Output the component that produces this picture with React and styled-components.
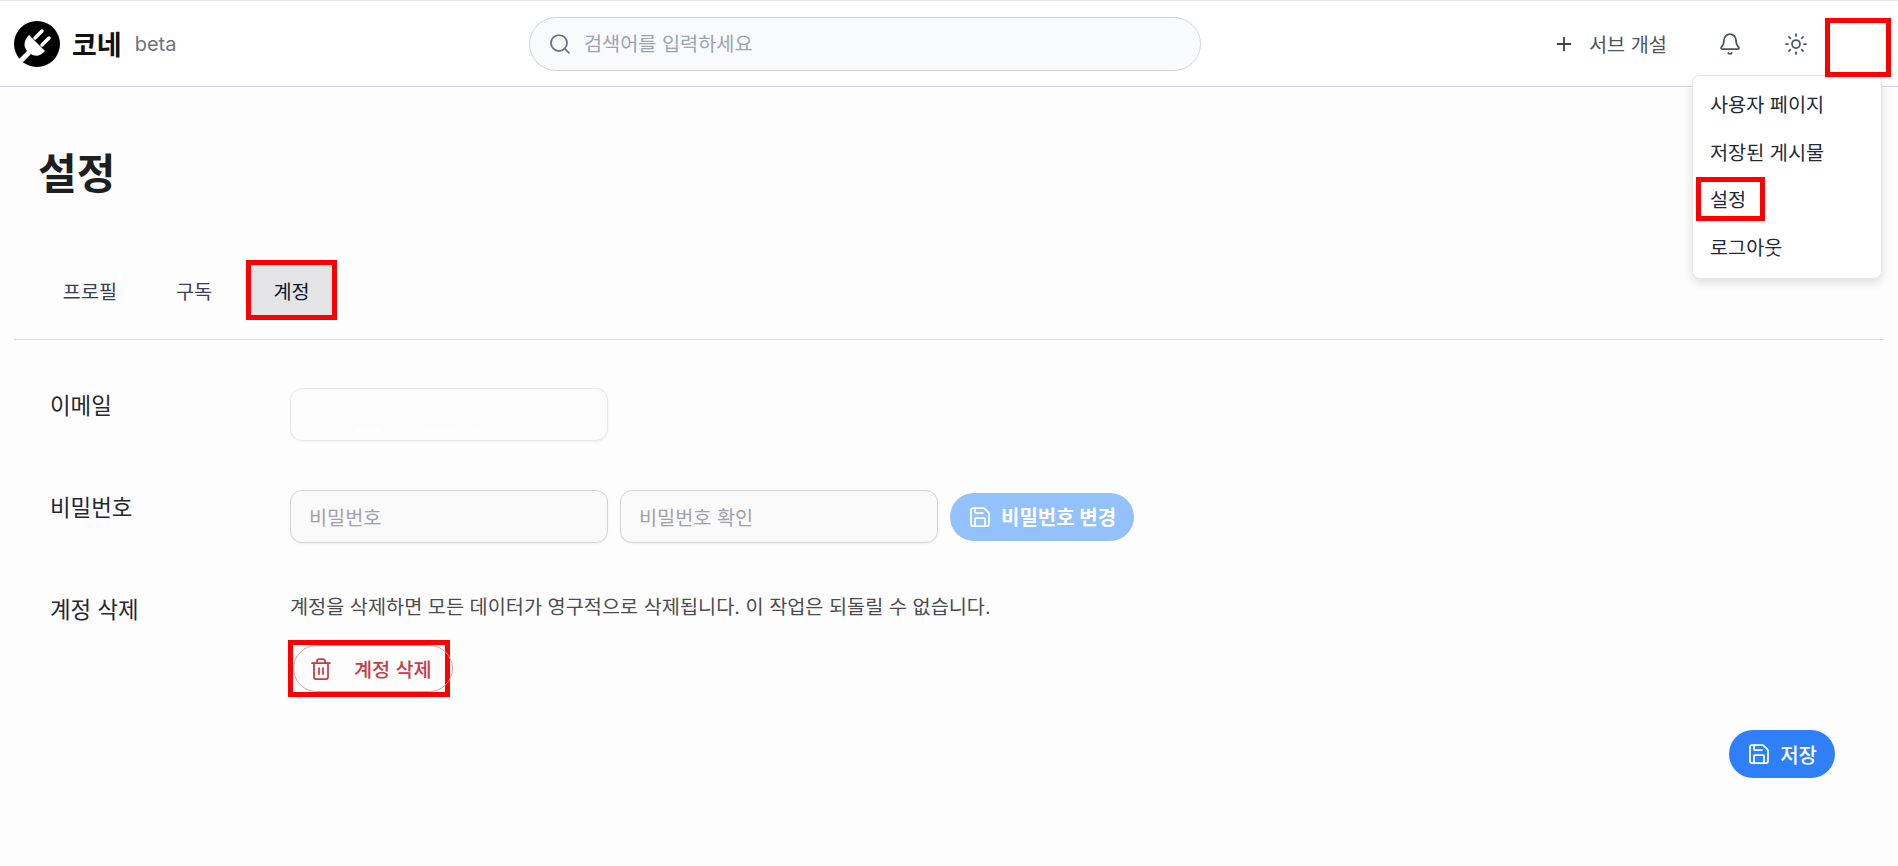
import React from 'react';
import styled, { createGlobalStyle } from 'styled-components';
import { Search, Plus, Bell, Sun, Save, Trash2 } from 'lucide-react';

const GlobalStyle = createGlobalStyle`
  html, body {
    margin: 0;
    padding: 0;
    background: #fdfdfd;
  }
  * {
    box-sizing: border-box;
  }
  body {
    font-family: Inter, "Noto Sans CJK KR", "Noto Sans", sans-serif;
    color: #1f2937;
  }
`

const Page = styled.div`
  width: 1898px;
  height: 866px;
  overflow: hidden;
  position: relative;
  background: #fdfdfd;
`

////  ---- HEADER----

const Header = styled.header`
  height: 87px;
  display: grid;
  grid-template-columns: 515px 672px 1fr;
  align-items: center;
  padding: 0 7px 0 14px;
  background: #fff;
  border-top: 1px solid #e5e7eb;
  border-bottom: 1px solid #d1d5db;
`

const Brand = styled.div`
  display: flex;
  align-items: center;
`

const BrandName = styled.span`
  margin-left: 12px;
  font-size: 27px;
  font-weight: 700;
  color: #111;
`

const Beta = styled.span`
  margin-left: 13px;
  font-size: 20px;
  color: #6b7280;
`

const SearchBox = styled.div`
  height: 54px;
  display: flex;
  align-items: center;
  gap: 12px;
  padding-left: 18px;
  background: #f9fafb;
  border: 1px solid #d1d5db;
  border-radius: 27px;
  font-size: 19.7px;
  color: #9ca3af;

  span {
    padding-bottom: 2px;
  }

  svg {
    color: #6b7280;
  }
`

const HeaderActions = styled.div`
  display: flex;
  align-items: center;
  justify-content: flex-end;
`

const CreateServer = styled.div`
  display: flex;
  align-items: center;
  gap: 14px;
  margin-right: 51px;
  font-size: 19.7px;
  color: #4b5563;
  white-space: nowrap;

  svg {
    color: #374151;
  }
`

const IconButton = styled.div`
  width: 24px;
  height: 24px;
  margin-right: 42px;
  color: #4b5563;
`

const AvatarMark = styled.div`
  position: relative;
  z-index: 1;
  width: 66px;
  height: 59px;
  margin: 8px 0 0 -25px;
  border: 5px solid #f00;
`

const Menu = styled.ul`
  position: absolute;
  top: 75px;
  left: 1692px;
  width: 190px;
  height: 204px;
  margin: 0;
  padding: 4px 0 0 17px;
  list-style: none;
  background: #fff;
  border: 1px solid #e5e7eb;
  border-radius: 8px;
  box-shadow: 0 4px 10px rgba(0, 0, 0, 0.12);
`

const MenuItem = styled.li`
  height: 47.5px;
  display: flex;
  align-items: center;
  font-size: 19.7px;
  color: #1f2937;
`

const MenuMark = styled.span`
  width: 69px;
  height: 44px;
  display: flex;
  align-items: center;
  margin-left: -14px;
  padding-left: 9px;
  border: 5px solid #f00;
`

////  ---- MAIN ----

const Main = styled.main`
  padding: 0 14px;
`

const Title = styled.h1`
  margin: 0;
  padding: 57px 0 0 24px;
  height: 173px;
  font-size: 42px;
  font-weight: 700;
  line-height: 60px;
  color: #1f1f1f;
`

const Tabs = styled.nav`
  display: flex;
  align-items: flex-start;
  height: 80px;
  padding-left: 24px;
  border-bottom: 1px solid #d9d9d9;
`

const Tab = styled.div`
  display: flex;
  align-items: center;
  justify-content: center;
  height: 60px;
  width: ${p => (p.$active ? 91 : 104)}px;
  font-size: 19.7px;
  color: ${p => (p.$active ? '#111827' : '#374151')};
  background: ${p => (p.$active ? '#e4e4e7' : 'transparent')};
  border: ${p => (p.$active ? '5px solid #f00' : 'none')};
`

const Row = styled.section`
  display: flex;
  padding-left: 36px;
  margin-top: ${p => p.$top}px;
`

const Label = styled.div`
  width: 240px;
  flex-shrink: 0;
  font-size: 22.4px;
  line-height: 30px;
  padding-top: 3px;
  color: #1f2937;
`

const Field = styled.div`
  width: 318px;
  height: 53px;
  display: flex;
  align-items: center;
  padding-left: 18px;
  background: #fafafa;
  border: 1px solid #d4d4d8;
  border-radius: 12px;
  box-shadow: 0 1px 2px rgba(0, 0, 0, 0.05);
  font-size: 19.7px;
  color: #a1a1aa;
`

const EmailField = styled(Field)`
  padding: 31px 0 0 65px;
  background: #fcfcfc;
  border-color: #e8e8e8;
`

const HiddenChar = styled.span`
  width: ${p => p.$width}px;
  height: 3px;
  margin-right: ${p => p.$gap}px;
  background: #fff;
`

const FieldRow = styled.div`
  display: flex;
  align-items: center;
  gap: 12px;
`

const Pill = styled.div`
  height: 48px;
  display: flex;
  align-items: center;
  gap: 9px;
  padding: 0 18px;
  border-radius: 24px;
  font-size: 20px;
  font-weight: ${p => (p.$bold ? 700 : 500)};
  color: #fff;
  background: ${p => (p.$muted ? '#93c1fb' : '#2f80f8')};
`

const DangerColumn = styled.div`
  display: flex;
  flex-direction: column;
  align-items: flex-start;
`

const DangerText = styled.p`
  margin: 0;
  font-size: 19.7px;
  line-height: 30px;
  color: #4b4b4f;
`

const DeleteWrap = styled.div`
  margin: 18px 0 0 -2px;
  width: 162px;
  height: 57px;
  border: 5px solid #f00;
`

const DeleteButton = styled.div`
  width: 160px;
  height: 47px;
  display: flex;
  align-items: center;
  padding-left: 15px;
  gap: 21px;
  background: transparent;
  border: 1px solid #d9a0a5;
  border-radius: 24px;
  font-size: 19.7px;
  font-weight: 500;
  color: #cb3a47;
  white-space: nowrap;
`

const SaveRow = styled.div`
  position: absolute;
  top: 730px;
  right: 63px;
`

function Logo() {
  return (
    <svg width="46" height="46" viewBox="0 0 46 46">
      <circle cx="23" cy="23" r="23" fill="#000" />
      <path fill="#fff" d="M15 14 L31 30 C27 35 21 36 17 33 L7 43 L3 40 L13 30 C9 25 10 19 15 14 Z" />
      <path stroke="#fff" strokeWidth="3.5" strokeLinecap="round" d="M21 17 L28 10 M28 24 L35 17" />
    </svg>
  )
}

function App() {
  return (
    <Page>
      <GlobalStyle />

      <Header>
        <Brand>
          <Logo />
          <BrandName>코네</BrandName>
          <Beta>beta</Beta>
        </Brand>

        <SearchBox>
          <Search size={24} strokeWidth={1.75} />
          <span>검색어를 입력하세요</span>
        </SearchBox>

        <HeaderActions>
          <CreateServer>
            <Plus size={22} strokeWidth={2} />
            서브 개설
          </CreateServer>
          <IconButton><Bell size={24} strokeWidth={1.75} /></IconButton>
          <IconButton><Sun size={24} strokeWidth={1.75} /></IconButton>
          <AvatarMark />
        </HeaderActions>
      </Header>

      <Menu>
        <MenuItem>사용자 페이지</MenuItem>
        <MenuItem>저장된 게시물</MenuItem>
        <MenuItem><MenuMark>설정</MenuMark></MenuItem>
        <MenuItem>로그아웃</MenuItem>
      </Menu>

      <Main>
        <Title>설정</Title>

        <Tabs>
          <Tab>프로필</Tab>
          <Tab>구독</Tab>
          <Tab $active>계정</Tab>
        </Tabs>

        <Row $top={48}>
          <Label>이메일</Label>
          <EmailField>
            <HiddenChar $width={24} $gap={44} />
            <HiddenChar $width={32} $gap={16} />
            <HiddenChar $width={8} $gap={0} />
          </EmailField>
        </Row>

        <Row $top={49}>
          <Label>비밀번호</Label>
          <FieldRow>
            <Field>비밀번호</Field>
            <Field>비밀번호 확인</Field>
            <Pill $muted $bold>
              <Save size={24} strokeWidth={1.75} />
              비밀번호 변경
            </Pill>
          </FieldRow>
        </Row>

        <Row $top={49}>
          <Label>계정 삭제</Label>
          <DangerColumn>
            <DangerText>계정을 삭제하면 모든 데이터가 영구적으로 삭제됩니다. 이 작업은 되돌릴 수 없습니다.</DangerText>
            <DeleteWrap>
              <DeleteButton>
                <Trash2 size={24} strokeWidth={1.75} />
                계정 삭제
              </DeleteButton>
            </DeleteWrap>
          </DangerColumn>
        </Row>

        <SaveRow>
          <Pill>
            <Save size={24} strokeWidth={1.75} />
            저장
          </Pill>
        </SaveRow>
      </Main>
    </Page>
  )
}

export default App;
